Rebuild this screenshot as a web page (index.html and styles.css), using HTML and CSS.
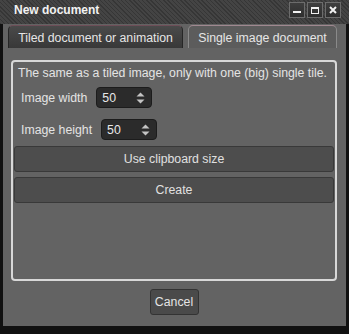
FILE: index.html
```html
<!DOCTYPE html>
<html>
<head>
<meta charset="utf-8">
<link rel="stylesheet" href="styles.css">
</head>
<body>
<div class="titlebar">
  <span class="title">New document</span>
  <div class="wbtns">
    <span class="wbtn"><svg width="14" height="14" viewBox="0 0 14 14"><rect x="3" y="8" width="8" height="2" fill="#f0f0f0"/></svg></span>
    <span class="wbtn"><svg width="14" height="14" viewBox="0 0 14 14"><rect x="3.5" y="4.5" width="7" height="6" fill="none" stroke="#f0f0f0" stroke-width="1"/><rect x="3" y="4" width="8" height="2" fill="#f0f0f0"/></svg></span>
    <span class="wbtn"><svg width="14" height="14" viewBox="0 0 14 14"><path d="M4 4 L10 10 M10 4 L4 10" stroke="#f0f0f0" stroke-width="2"/></svg></span>
  </div>
</div>
<div class="window">
  <div class="tabs">
    <div class="tab tab-inactive">Tiled document or animation</div>
    <div class="tab tab-active">Single image document</div>
  </div>
  <div class="panel">
    <div class="desc">The same as a tiled image, only with one (big) single tile.</div>
    <div class="row row1">
      <span class="label">Image width</span>
      <span class="spin"><span class="val">50</span><svg class="arrows" width="9" height="12" viewBox="0 0 9 12"><polygon points="0.5,4.5 4.5,0.5 8.5,4.5" fill="#c4c4c4"/><polygon points="0.5,7.5 8.5,7.5 4.5,11.5" fill="#c4c4c4"/></svg></span>
    </div>
    <div class="row row2">
      <span class="label">Image height</span>
      <span class="spin"><span class="val">50</span><svg class="arrows" width="9" height="12" viewBox="0 0 9 12"><polygon points="0.5,4.5 4.5,0.5 8.5,4.5" fill="#c4c4c4"/><polygon points="0.5,7.5 8.5,7.5 4.5,11.5" fill="#c4c4c4"/></svg></span>
    </div>
    <div class="btn btn1">Use clipboard size</div>
    <div class="btn btn2">Create</div>
  </div>
  <div class="footer">
    <div class="cancel">Cancel</div>
  </div>
</div>
</body>
</html>
```
FILE: styles.css
```css
html, body {
  margin: 0;
  padding: 0;
}
body {
  background: #111111;
  width: 349px;
  height: 334px;
  overflow: hidden;
  font-family: "Liberation Sans", Arial, sans-serif;
  font-size: 12.3px;
  color: #e4e4e4;
}
.titlebar {
  height: 24px;
  box-sizing: border-box;
  display: flex;
  align-items: flex-start;
  padding: 2px 8px 0 14px;
  background: repeating-linear-gradient(45deg, #363636 0 1px, #444444 1px 3px);
}
.title {
  font-weight: bold;
  font-size: 12px;
  color: #f2f2f2;
  line-height: 16px;
}
.wbtns {
  margin-left: auto;
  display: flex;
  gap: 2px;
  margin-right: 0;
}
.wbtn {
  width: 16px;
  height: 16px;
  box-sizing: border-box;
  border: 1px solid #6c6c6c;
  background: linear-gradient(#3e3e3e, #2e2e2e);
  display: flex;
  align-items: center;
  justify-content: center;
}
.window {
  margin: 0 3px;
  height: 302px;
  background: #636363;
  display: flex;
  flex-direction: column;
  overflow: hidden;
}
.tabs {
  display: flex;
  gap: 5px;
  margin: 1px 0 0 5px;
  height: 23px;
}
.tab {
  box-sizing: border-box;
  height: 23px;
  border-radius: 5px 5px 0 0;
  display: flex;
  align-items: center;
  justify-content: center;
  padding-top: 1px;
  color: #e6e6e6;
}
.tab-inactive {
  width: 175px;
  background: linear-gradient(#4a4a4a, #383838);
  border: 1px solid #262626;
  border-top-color: #6e4e58;
  border-bottom: none;
}
.tab-active {
  width: 149px;
  background: #5c5c5c;
  border: 1px solid #8a8a8a;
  border-top-color: #a08890;
  border-bottom: none;
}
.panel {
  margin: 12px 0 0 8px;
  width: 326px;
  height: 221px;
  box-sizing: border-box;
  border: 2px solid #d8d8d8;
  border-radius: 4px;
  display: flex;
  flex-direction: column;
}
.desc {
  margin: 3px 0 0 5px;
  line-height: 16px;
  white-space: nowrap;
}
.row {
  display: flex;
  align-items: center;
  gap: 9px;
  padding-left: 8px;
  height: 21px;
}
.row1 { margin-top: 6px; }
.row2 { margin-top: 11px; }
.spin {
  position: relative;
  width: 56px;
  height: 21px;
  box-sizing: border-box;
  background: #2b2b2b;
  border: 1px solid #1c1c1c;
  border-radius: 4px;
  display: flex;
  align-items: center;
  padding-left: 5px;
}
.val {
  color: #e8e8e8;
}
.arrows {
  margin-left: auto;
  margin-right: 6px;
}
.btn {
  margin: 0 1px;
  height: 26px;
  box-sizing: border-box;
  background: #4d4d4d;
  border: 1px solid #393939;
  border-radius: 3px;
  display: flex;
  align-items: center;
  justify-content: center;
  color: #e0e0e0;
}
.btn1 { margin-top: 6px; }
.btn2 { margin-top: 5px; }
.footer {
  display: flex;
  justify-content: center;
  margin-top: 8px;
  padding-right: 1px;
}
.cancel {
  width: 49px;
  height: 26px;
  box-sizing: border-box;
  background: #4a4a4a;
  border: 1px solid #333333;
  border-radius: 3px;
  display: flex;
  align-items: center;
  justify-content: center;
  color: #e4e4e4;
}
```
